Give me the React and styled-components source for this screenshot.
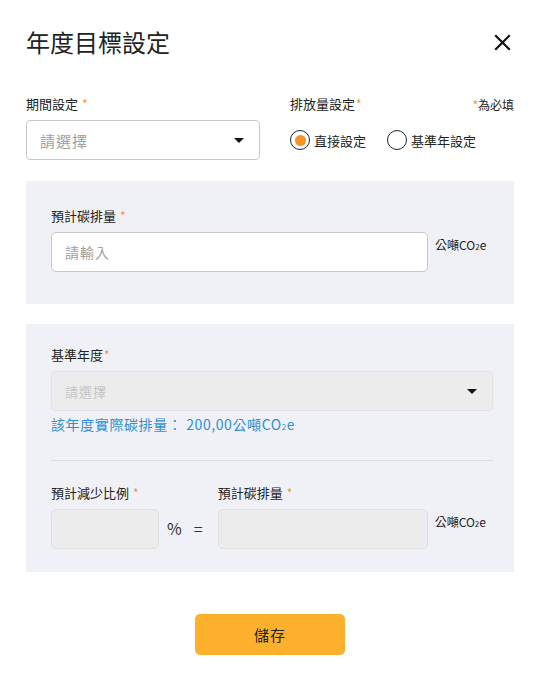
import React from "react";
import styled, { createGlobalStyle } from "styled-components";

const Global = createGlobalStyle`
  html, body {
    margin: 0;
    padding: 0;
    background: #ffffff;
  }
  body {
    font-family: "Noto Sans CJK TC", "Noto Sans", sans-serif;
    color: #222;
  }
`;

const Modal = styled.div`
  width: 552px;
  box-sizing: border-box;
  padding: 24px 38px 0 26px;
`;

const Header = styled.div`
  display: flex;
  align-items: center;
  justify-content: space-between;
  height: 36px;
  margin-bottom: 36px;
`;

const Title = styled.h1`
  margin: 0;
  font-size: 24px;
  font-weight: 400;
  color: #222;
  line-height: 36px;
`;

const Close = styled.button`
  border: none;
  background: none;
  padding: 0;
  width: 20px;
  height: 20px;
  margin-right: 2px;
  display: flex;
  align-items: center;
  justify-content: center;
  cursor: pointer;
`;

const TopRow = styled.div`
  display: grid;
  grid-template-columns: 234px 1fr;
  column-gap: 30px;
  margin-bottom: 21px;
`;

const Field = styled.div`
  display: flex;
  flex-direction: column;
`;

const LabelRow = styled.div`
  display: flex;
  justify-content: space-between;
  align-items: center;
  height: 16px;
  margin-bottom: 8px;
`;

const Label = styled.label`
  font-size: 13px;
  color: #222;
  line-height: 16px;
`;

const Star = styled.span`
  color: #f7931e;
  font-size: 12px;
  margin-left: ${(p) => p.$gap ?? 3}px;
`;

const Required = styled.span`
  font-size: 12px;
  color: #222;
  & > span {
    color: #f7931e;
  }
`;

const Select = styled.div`
  box-sizing: border-box;
  height: 40px;
  border: 1px solid ${(p) => (p.$disabled ? "#e2e2e2" : "#c8c8c8")};
  background: ${(p) => (p.$disabled ? "#ececec" : "#fff")};
  border-radius: 4px;
  display: flex;
  align-items: center;
  justify-content: space-between;
  padding: 0 15px 0 13px;
`;

const Placeholder = styled.span`
  font-size: ${(p) => p.$size || 15}px;
  letter-spacing: 1px;
  color: ${(p) => (p.$faint ? "#c4c4c4" : "#a0a0a0")};
`;

const Caret = styled.span`
  width: 0;
  height: 0;
  border-left: 5px solid transparent;
  border-right: 5px solid transparent;
  border-top: 5px solid #111;
`;

const RadioGroup = styled.div`
  display: flex;
  align-items: center;
  height: 40px;
  gap: 21px;
`;

const RadioItem = styled.div`
  display: flex;
  align-items: center;
  gap: 4px;
  font-size: 13px;
  color: #222;
`;

const RadioCircle = styled.span`
  box-sizing: border-box;
  width: 20px;
  height: 20px;
  border-radius: 50%;
  border: 1.5px solid #222;
  display: flex;
  align-items: center;
  justify-content: center;
  &::after {
    content: "";
    display: ${(p) => (p.$checked ? "block" : "none")};
    width: 11px;
    height: 11px;
    border-radius: 50%;
    background: #f7931e;
  }
`;

const Panel = styled.div`
  background: #f0f1f6;
  padding: ${(p) => p.$pad};
  margin-bottom: 20px;
`;

const InputRow = styled.div`
  display: flex;
  align-items: center;
  gap: 7px;
`;

const Input = styled.div`
  box-sizing: border-box;
  width: ${(p) => p.$w}px;
  height: 40px;
  border-radius: 5px;
  border: 1px solid ${(p) => (p.$disabled ? "#e0e0e0" : "#c8c8c8")};
  background: ${(p) => (p.$disabled ? "#ececec" : "#fff")};
  display: flex;
  align-items: center;
  padding: 0 13px;
`;

const Unit = styled.span`
  font-size: 12px;
  color: #222;
  align-self: flex-start;
  margin-top: 4px;
  white-space: nowrap;
  font-family: "Noto Sans CJK TC", "Liberation Sans", sans-serif;
`;

const Info = styled.div`
  margin-top: 3px;
  font-size: 14px;
  letter-spacing: 0.6px;
  color: #2d8fd5;
  line-height: 20px;
`;

const Divider = styled.hr`
  border: none;
  border-top: 1px solid #dedede;
  margin: 23px 0 24px;
`;

const SplitRow = styled.div`
  display: flex;
  align-items: flex-end;
`;

const Symbol = styled.span`
  font-size: 16px;
  color: #333;
  height: 40px;
  line-height: 38px;
  margin: 0 ${(p) => p.$mr}px 0 ${(p) => p.$ml}px;
`;

const Footer = styled.div`
  display: flex;
  justify-content: center;
  padding-top: 22px;
`;

const SaveButton = styled.button`
  width: 150px;
  height: 41px;
  border: none;
  border-radius: 5px;
  background: #fdb02b;
  color: #222;
  font-size: 15px;
  letter-spacing: 1px;
  font-family: "Noto Sans CJK TC", sans-serif;
  cursor: pointer;
`;

const Sub = styled.sub`
  font-size: 8px;
  vertical-align: baseline;
`;

const CO2e = () => (
  <>
    CO<Sub>2</Sub>e
  </>
);

export default function App() {
  return (
    <>
      <Global />
      <Modal>
        <Header>
          <Title>年度目標設定</Title>
          <Close aria-label="close">
            <svg width="17" height="17" viewBox="0 0 17 17">
              <path d="M2 2 L15 15 M15 2 L2 15" stroke="#111" strokeWidth="2.2" strokeLinecap="square" />
            </svg>
          </Close>
        </Header>

        <TopRow>
          <Field>
            <LabelRow>
              <Label>
                期間設定<Star $gap={4}>*</Star>
              </Label>
            </LabelRow>
            <Select>
              <Placeholder>請選擇</Placeholder>
              <Caret />
            </Select>
          </Field>
          <Field>
            <LabelRow>
              <Label>
                排放量設定<Star $gap={1}>*</Star>
              </Label>
              <Required>
                <span>*</span>為必填
              </Required>
            </LabelRow>
            <RadioGroup>
              <RadioItem>
                <RadioCircle $checked />
                直接設定
              </RadioItem>
              <RadioItem>
                <RadioCircle />
                基準年設定
              </RadioItem>
            </RadioGroup>
          </Field>
        </TopRow>

        <Panel $pad="27px 21px 32px 25px">
          <LabelRow>
            <Label>
              預計碳排量<Star $gap={4}>*</Star>
            </Label>
          </LabelRow>
          <InputRow>
            <Input $w={377}>
              <Placeholder $size={14}>請輸入</Placeholder>
            </Input>
            <Unit>
              公噸<CO2e />
            </Unit>
          </InputRow>
        </Panel>

        <Panel $pad="23px 21px 23px 25px">
          <LabelRow>
            <Label>
              基準年度<Star $gap={1}>*</Star>
            </Label>
          </LabelRow>
          <Select $disabled>
            <Placeholder $size={13} $faint>
              請選擇
            </Placeholder>
            <Caret />
          </Select>
          <Info>
            該年度實際碳排量： 200,00公噸
            <CO2e />
          </Info>
          <Divider />
          <SplitRow>
            <Field>
              <LabelRow>
                <Label>
                  預計減少比例<Star $gap={4}>*</Star>
                </Label>
              </LabelRow>
              <Input $w={108} $disabled />
            </Field>
            <Symbol $ml={8} $mr={0}>%</Symbol>
            <Symbol $ml={12} $mr={15}>=</Symbol>
            <Field>
              <LabelRow>
                <Label>
                  預計碳排量<Star $gap={4}>*</Star>
                </Label>
              </LabelRow>
              <InputRow>
                <Input $w={210} $disabled />
                <Unit>
                  公噸<CO2e />
                </Unit>
              </InputRow>
            </Field>
          </SplitRow>
        </Panel>

        <Footer>
          <SaveButton>儲存</SaveButton>
        </Footer>
      </Modal>
    </>
  );
}
